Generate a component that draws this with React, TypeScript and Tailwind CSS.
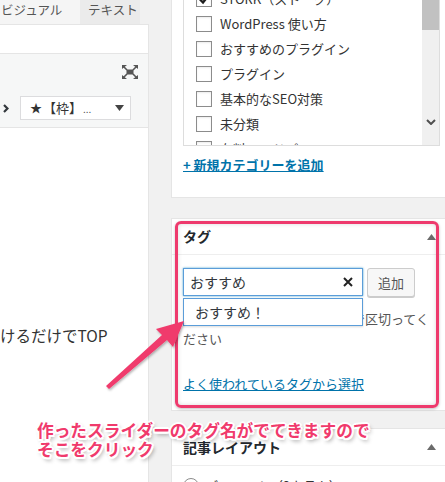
import React from "react";

const Checkbox = ({ checked = false }: { checked?: boolean }) => (
  <span className="w-[16px] h-[16px] shrink-0 border border-[#8c8c8c] bg-white shadow-[inset_0_1px_2px_rgba(0,0,0,0.08)] flex items-center justify-center">
    {checked && (
      <svg width="12" height="12" viewBox="0 0 12 12">
        <path d="M2 6.5 L5 9.5 L10.5 2.5" fill="none" stroke="#1e1e1e" strokeWidth="2.4" />
      </svg>
    )}
  </span>
);

const UpTri = () => (
  <svg width="9" height="6" viewBox="0 0 9 6">
    <polygon points="4.5,0 9,6 0,6" fill="#6b6b6b" />
  </svg>
);

const categories = [
  { label: "STORK（ストーク）", checked: true },
  { label: "WordPress 使い方" },
  { label: "おすすめのプラグイン" },
  { label: "プラグイン" },
  { label: "基本的なSEO対策" },
  { label: "未分類" },
  { label: "有料ワードプレステーマ" },
];

export default function App() {
  return (
    <div className="relative w-[445px] h-[482px] overflow-hidden bg-[#f1f1f1] flex font-['Noto_Sans_CJK_JP','Noto_Sans',sans-serif] text-[#333]">
      {/* Left editor column */}
      <div className="w-[149px] shrink-0 flex flex-col">
        <div className="h-[24px] shrink-0 flex text-[12.5px] text-[#555]">
          <div className="w-[80px] bg-[#f5f5f5] pl-[1px] leading-[20px] whitespace-nowrap">ビジュアル</div>
          <div className="w-[60px] bg-[#ebebeb] pl-[8px] leading-[20px] whitespace-nowrap">テキスト</div>
        </div>
        <div className="flex-1 flex flex-col bg-white border-t border-r border-[#e5e5e5]">
          <div className="h-[29px] shrink-0 border-b border-[#e5e5e5] bg-white" />
          <div className="h-[74px] shrink-0 border-b border-[#e5e5e5] bg-[#f6f7f7] flex flex-col pt-[11px]">
            <div className="flex justify-end pr-[10px] h-[14px]">
              <svg width="16" height="14" viewBox="0 0 16 14">
                <polygon points="0,0 5,0 0,4" fill="#555" />
                <polygon points="16,0 11,0 16,4" fill="#555" />
                <polygon points="0,14 5,14 0,10" fill="#555" />
                <polygon points="16,14 11,14 16,10" fill="#555" />
                <path d="M1 1 L5 5 M15 1 L11 5 M1 13 L5 9 M15 13 L11 9" stroke="#555" strokeWidth="1.6" />
                <rect x="4.5" y="4.5" width="7" height="5" fill="#555" />
              </svg>
            </div>
            <div className="mt-[17px] h-[24px] flex items-center">
              <div className="w-[20px] pl-[3px] flex items-center">
                <svg width="6" height="9" viewBox="0 0 6 9">
                  <path d="M1 1 L4.5 4.5 L1 8" fill="none" stroke="#32373c" strokeWidth="2.2" />
                </svg>
              </div>
              <div className="w-[111px] h-[24px] bg-white border border-[#dcdcde] flex items-center pl-[9px] pr-[6px] text-[13px] text-[#333]">
                <span className="text-[12px]">★</span>
                <span className="ml-[1px]">【枠】</span>
                <span className="text-[10px] text-[#555] ml-[1px]">...</span>
                <span className="ml-auto">
                  <svg width="9" height="6" viewBox="0 0 9 6">
                    <polygon points="0,0 9,0 4.5,6" fill="#444" />
                  </svg>
                </span>
              </div>
            </div>
          </div>
          <div className="flex-1 pt-[195px] text-[15.5px] leading-[24px] text-[#333] whitespace-nowrap">
            けるだけでTOP
          </div>
        </div>
      </div>

      <div className="w-[22px] shrink-0" />

      {/* Right sidebar */}
      <div className="w-[281px] shrink-0 flex flex-col">
        {/* Category panel */}
        <div className="h-[198px] shrink-0 bg-white border-x border-b border-[#e5e5e5] px-[11px]">
          <div className="h-[146px] border-x border-b border-[#dddddd] flex overflow-hidden">
            <div className="flex-1 flex flex-col mt-[-14px] pl-[12px]">
              {categories.map((c, i) => (
                <div key={i} className="h-[25px] shrink-0 flex items-center gap-[8px] text-[13px] text-[#333] whitespace-nowrap">
                  <Checkbox checked={c.checked} />
                  <span>{c.label}</span>
                </div>
              ))}
            </div>
            <div className="w-[17px] shrink-0 bg-[#f0f0f0] flex flex-col">
              <div className="h-[30px] bg-[#c1c1c1]" />
              <div className="mt-auto mb-[15px] h-[16px] flex items-center justify-center">
                <svg width="10" height="6" viewBox="0 0 10 6">
                  <path d="M1 1 L5 5 L9 1" fill="none" stroke="#505050" strokeWidth="2" />
                </svg>
              </div>
            </div>
          </div>
          <div className="mt-[9px] leading-[20px] text-[13px] font-semibold text-[#0073aa] underline">
            + 新規カテゴリーを追加
          </div>
        </div>

        {/* Tag panel */}
        <div className="relative shrink-0 mt-[20px] h-[193px] bg-white border border-[#e5e5e5]">
          <div className="h-[36px] border-b border-[#eeeeee] flex items-center justify-between pl-[11px] pr-[15px]">
            <span className="text-[14px] font-bold text-[#23282d]">タグ</span>
            <UpTri />
          </div>
          <div className="relative px-[11px] pt-[13px]">
            <div className="flex items-start">
              <div className="w-[180px] h-[28px] shrink-0 border border-[#5b9dd9] shadow-[0_0_2px_rgba(30,140,190,0.8)] bg-white flex items-center pl-[6px] pr-[9px] text-[14px] text-[#32373c]">
                <span>おすすめ</span>
                <span className="ml-auto">
                  <svg width="10" height="10" viewBox="0 0 10 10">
                    <path d="M1 1 L9 9 M9 1 L1 9" stroke="#222" strokeWidth="2" />
                  </svg>
                </span>
              </div>
              <div className="ml-[4px] w-[48px] h-[29px] shrink-0 border border-[#cccccc] rounded-[3px] bg-[#f7f7f7] shadow-[0_1px_0_#ccc] flex items-center justify-center text-[13px] text-[#555]">
                追加
              </div>
            </div>
            <div className="mt-[12px] leading-[20px] text-[13px] text-[#555]">
              タグが複数ある場合はコンマで区切ってください
            </div>
            <div className="mt-[25px] leading-[20px] text-[13px] text-[#0073aa] underline">
              よく使われているタグから選択
            </div>
            <div className="absolute left-[11px] top-[43px] w-[180px] h-[28px] border border-[#5b9dd9] bg-white shadow-[0_1px_2px_rgba(0,0,0,0.15)] flex items-center pl-[11px] text-[14px] text-[#32373c]">
              おすすめ！
            </div>
          </div>
          <div className="absolute left-[3px] top-[2px] w-[264px] h-[187px] border-[3px] border-[#ee3a6d] rounded-[6px] shadow-[inset_0_0_4px_rgba(0,0,0,0.15),0_1px_3px_rgba(0,0,0,0.25)]" />
        </div>

        {/* Layout panel */}
        <div className="shrink-0 mt-[17px] h-[80px] bg-white border border-[#e5e5e5]">
          <div className="h-[37px] border-b border-[#eeeeee] flex items-center justify-between pl-[11px] pr-[15px]">
            <span className="text-[14px] font-bold text-[#23282d]">記事レイアウト</span>
            <UpTri />
          </div>
          <div className="pl-[11px] pt-[10px] flex items-center gap-[6px] text-[13px] text-[#333]">
            <span className="w-[16px] h-[16px] rounded-full border border-[#8c8c8c] bg-white" />
            <span>デフォルト（2カラム）</span>
          </div>
        </div>
      </div>

      {/* Annotation arrow */}
      <svg className="absolute left-0 top-0 pointer-events-none" width="445" height="482" viewBox="0 0 445 482">
        <defs>
          <filter id="sh" x="-20%" y="-20%" width="140%" height="140%">
            <feDropShadow dx="1" dy="1.5" stdDeviation="1.2" floodColor="#000" floodOpacity="0.3" />
          </filter>
        </defs>
        <polygon
          points="106,386 162,335 156,329 184,321 173,347 167,340 109,389"
          fill="#f03a6c"
          filter="url(#sh)"
        />
      </svg>

      {/* Annotation text */}
      <div className="absolute left-[37px] top-[421px] text-[16.7px] leading-[19px] font-bold text-[#f03a6c] whitespace-nowrap [text-shadow:2px_0_0_#fff,-2px_0_0_#fff,0_2px_0_#fff,0_-2px_0_#fff,1.5px_1.5px_0_#fff,-1.5px_-1.5px_0_#fff,1.5px_-1.5px_0_#fff,-1.5px_1.5px_0_#fff,2px_3px_4px_rgba(0,0,0,0.45)]">
        <div>作ったスライダーのタグ名がでてきますので</div>
        <div>そこをクリック</div>
      </div>
    </div>
  );
}
